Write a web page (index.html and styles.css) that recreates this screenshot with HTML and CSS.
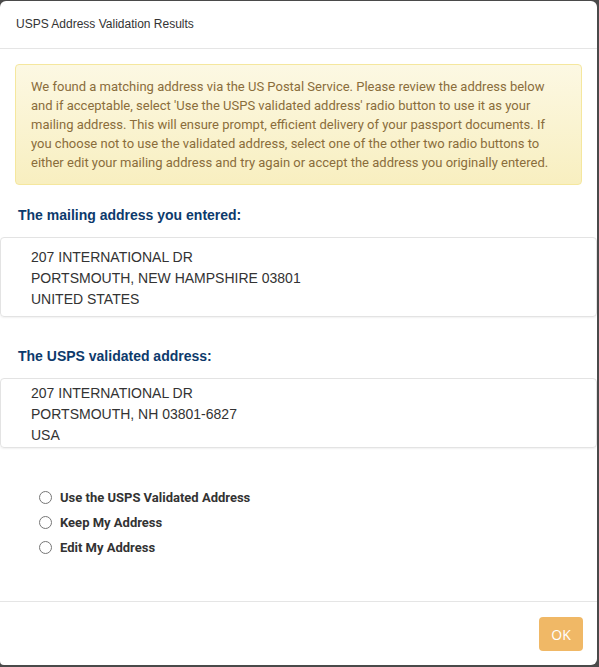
FILE: index.html
```html
<!DOCTYPE html>
<html>
<head>
<meta charset="utf-8">
<title>USPS Address Validation Results</title>
<link rel="stylesheet" href="styles.css">
</head>
<body>
	<div class="modal">
		<div class="modal-header">
			<h4 class="modal-title">USPS Address Validation Results</h4>
		</div>
		<div class="modal-body">
			<div class="alert">
				We found a matching address via the US Postal Service. Please review the address below and if acceptable, select 'Use the USPS validated address' radio button to use it as your mailing address. This will ensure prompt, efficient delivery of your passport documents. If you choose not to use the validated address, select one of the other two radio buttons to either edit your mailing address and try again or accept the address you originally entered.
			</div>
			<h5 class="addr-title">The mailing address you entered:</h5>
			<div class="addr-box entered">
				<div>207 INTERNATIONAL DR</div>
				<div>PORTSMOUTH, NEW HAMPSHIRE 03801</div>
				<div>UNITED STATES</div>
			</div>
			<h5 class="addr-title second">The USPS validated address:</h5>
			<div class="addr-box validated">
				<div>207 INTERNATIONAL DR</div>
				<div>PORTSMOUTH, NH 03801-6827</div>
				<div>USA</div>
			</div>
			<div class="choices">
				<label class="choice"><input type="radio" name="addr"><span>Use the USPS Validated Address</span></label>
				<label class="choice"><input type="radio" name="addr"><span>Keep My Address</span></label>
				<label class="choice"><input type="radio" name="addr"><span>Edit My Address</span></label>
			</div>
		</div>
		<div class="modal-footer">
			<button class="btn-ok" type="button">OK</button>
		</div>
	</div>
</body>
</html>
```

FILE: styles.css
```css
html,body{ margin:0; padding:0;}
body{ background:#4a4a4a; width:599px; height:667px; overflow:hidden; font-family:"Liberation Sans", Arial, sans-serif; color:#333;}
.modal{ width:597px; height:664px; margin-top:1px; background:#fff; border-radius:6px 6px 6px 4px; display:flex; flex-direction:column; box-sizing:border-box;}
.modal-header{ padding:15px 16px; border-bottom:1px solid #e5e5e5;}
.modal-title{ margin:0; font-size:12px; line-height:17px; font-weight:normal; color:#333;}
.modal-body{ padding:15px 0 0; flex:1;}
.alert{ margin:0 15px 0 15px; padding:12px 15px; border:1px solid #f5e79e; border-radius:4px; background:linear-gradient(to bottom, #fcf8e3, #f8efc0); color:#8a6d3b; font-family:Roboto, "Liberation Sans", sans-serif; font-size:13px; line-height:19px;}
.addr-title{ margin:21px 0 13px 18px; font-size:14px; line-height:18px; font-weight:bold; color:#0d3a6c;}
.addr-title.second{ margin-top:30px;}
.addr-box{ border:1px solid #e3e3e3; border-radius:4px; box-shadow:0 1px 2px rgba(0,0,0,.06); padding-left:30px; font-size:14px; line-height:21px; color:#333;}
.addr-box.entered{ padding-top:9px; padding-bottom:6px;}
.addr-box.validated{ padding-top:4px; padding-bottom:1px;}
.choices{ padding:39px 0 0 39px; display:flex; flex-direction:column; gap:5px;}
.choice{ display:flex; align-items:center; gap:8px; height:20px; font-family:Roboto, "Liberation Sans", sans-serif; font-weight:bold; font-size:13px; color:#333;}
.choice input{ margin:0; width:13px; height:13px;}
.modal-footer{ border-top:1px solid #e5e5e5; padding:15px 14px 14px; display:flex; justify-content:flex-end;}
.btn-ok{ width:44px; height:34px; border:none; border-radius:4px; background:#f0b866; color:#fff; font-family:"Open Sans", "Liberation Sans", sans-serif; font-size:14px; padding:0;}
```
